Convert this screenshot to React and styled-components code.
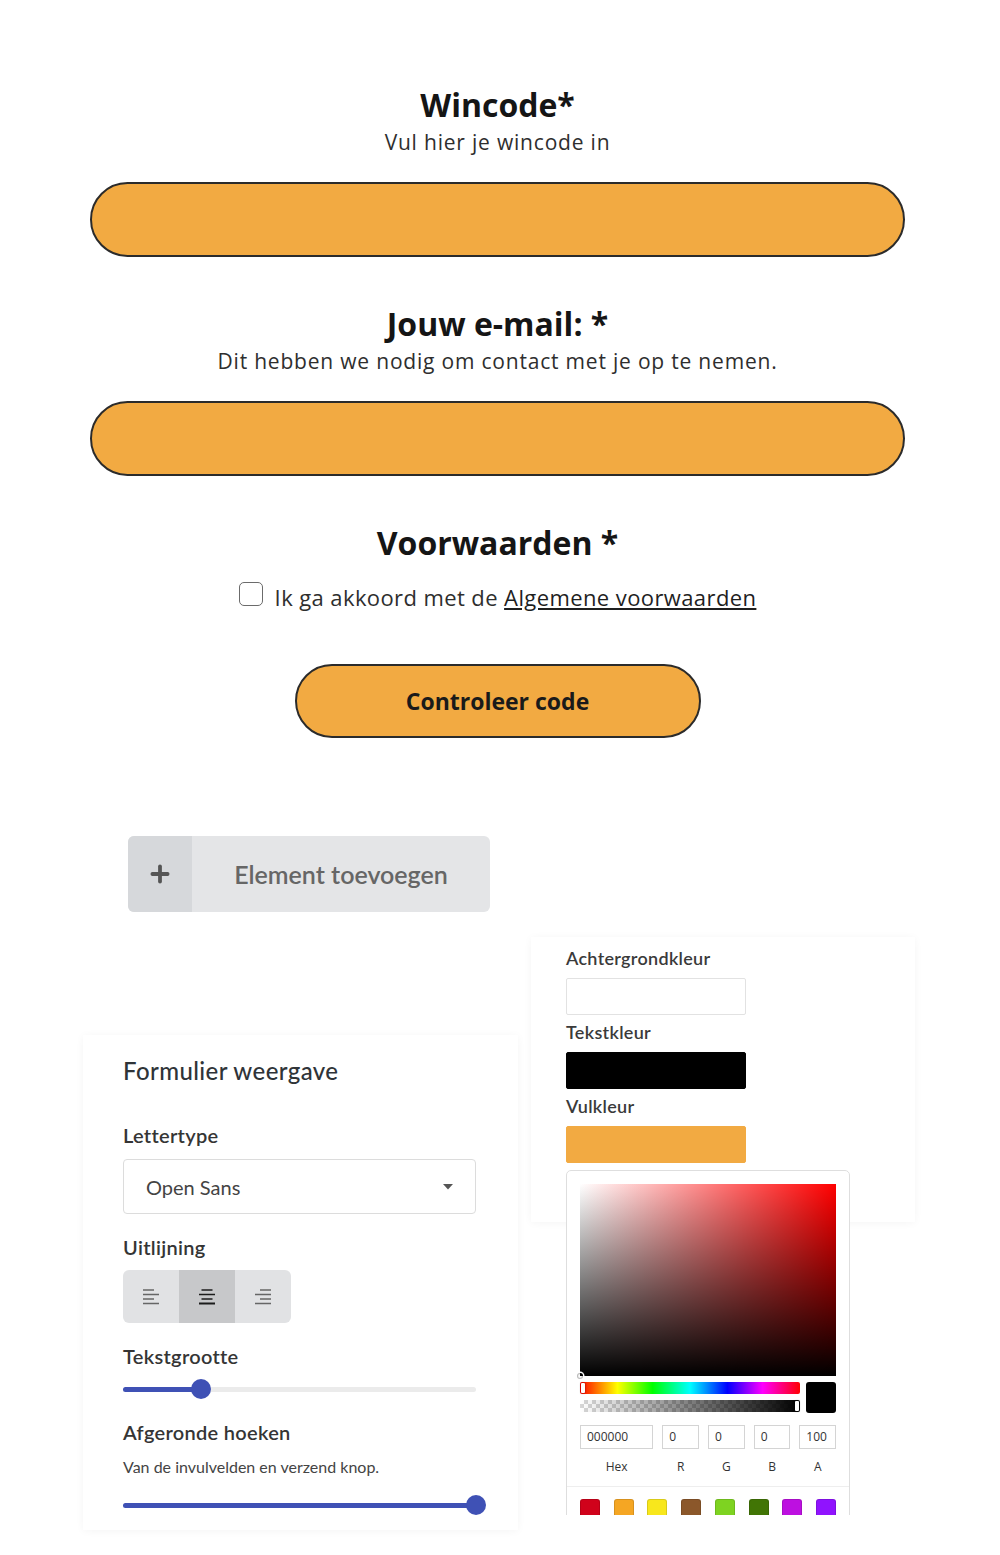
import styled, { createGlobalStyle } from "styled-components";
import { Plus } from "lucide-react";

const ORANGE = "#f2aa42";
const INDIGO = "#3f51b5";

const GlobalStyle = createGlobalStyle`
  body {
    margin: 0;
    background: #fff;
    font-family: "Open Sans", "Liberation Sans", sans-serif;
  }
  * { box-sizing: border-box; }
`;

const Page = styled.main`
  width: 1000px;
  height: 1555px;
  overflow: hidden;
`;

/* ---------- formulier voorbeeld ---------- */

const Form = styled.form`
  width: 815px;
  margin-left: 90px;
  padding-top: 85px;
  display: flex;
  flex-direction: column;
  align-items: center;
  font-family: "Open Sans", sans-serif;
`;

const FieldTitle = styled.h2`
  margin: ${(p) => (p.$first ? "0" : "47px")} 0 0;
  font-size: 32px;
  line-height: 40px;
  font-weight: 700;
  color: #151515;
`;

const FieldHint = styled.p`
  margin: 3px 0 0;
  font-size: 21px;
  line-height: 28px;
  letter-spacing: 0.8px;
  color: #2e2e2e;
`;

const TextField = styled.input`
  margin-top: 26px;
  width: 100%;
  height: 75px;
  border: 2px solid #2b2b2b;
  border-radius: 40px;
  background: ${ORANGE};
  outline: none;
`;

const CheckRow = styled.label`
  margin-top: 20px;
  display: flex;
  align-items: center;
  gap: 12px;
  font-size: 22px;
  line-height: 28px;
  letter-spacing: 0.4px;
  color: #2e2e2e;

  a {
    color: #1f1f1f;
    text-decoration: underline;
  }
`;

const Check = styled.input`
  appearance: none;
  margin: 0;
  width: 24px;
  height: 24px;
  border: 1.5px solid #6b6b6b;
  border-radius: 5px;
  background: #fff;
  position: relative;
  top: -3px;
`;

const Submit = styled.button`
  margin-top: 53px;
  width: 406px;
  height: 74px;
  border: 2px solid #2b2b2b;
  border-radius: 40px;
  background: ${ORANGE};
  font-family: "Open Sans", sans-serif;
  font-size: 23px;
  font-weight: 700;
  color: #1a1a1a;
`;

/* ---------- element toevoegen ---------- */

const AddButton = styled.button`
  margin: 98px 0 0 128px;
  width: 362px;
  height: 76px;
  padding: 0;
  border: none;
  border-radius: 6px;
  overflow: hidden;
  display: flex;
  background: #e4e5e7;
  font-family: Lato, sans-serif;
  font-size: 25px;
  font-weight: 600;
  color: #666;
`;

const AddIcon = styled.span`
  width: 64px;
  display: flex;
  align-items: center;
  justify-content: center;
  background: #d6d8db;
  color: #555;
`;

const AddLabel = styled.span`
  flex: 1;
  display: flex;
  align-items: center;
  justify-content: center;
`;

/* ---------- instellingen ---------- */

const SettingsRow = styled.div`
  margin-top: 25px;
  padding-left: 83px;
  display: flex;
  align-items: flex-start;
  gap: 13px;
  font-family: Lato, sans-serif;
  color: #333;
`;

const Panel = styled.section`
  background: #fff;
  box-shadow: 0 1px 8px rgba(0, 0, 0, 0.045);
`;

const LayoutPanel = styled(Panel)`
  margin-top: 98px;
  width: 435px;
  padding: 22px 42px 15px 40px;
`;

const ColorPanel = styled(Panel)`
  width: 384px;
  height: 285px;
  padding: 10px 35px;
`;

const PanelTitle = styled.h3`
  margin: 0;
  font-size: 24px;
  line-height: 28px;
  font-weight: 500;
  letter-spacing: 0.4px;
  color: #2f3438;
`;

const SettingLabel = styled.h4`
  margin: ${(p) => p.$top || "21px"} 0 0;
  font-size: 20px;
  line-height: 24px;
  font-weight: 600;
  letter-spacing: 0.3px;
  color: #353535;
`;

const SmallHint = styled.p`
  margin: 13px 0 0;
  font-size: 16px;
  line-height: 20px;
  color: #444;
`;

const Select = styled.div`
  margin-top: 12px;
  height: 55px;
  border: 1px solid #dcdcdc;
  border-radius: 4px;
  padding: 0 22px;
  display: flex;
  align-items: center;
  justify-content: space-between;
  font-size: 20px;
  color: #444;
`;

const AlignGroup = styled.div`
  margin-top: 11px;
  display: inline-flex;
  border-radius: 6px;
  overflow: hidden;
  background: #e1e2e4;
`;

const AlignButton = styled.button`
  width: 56px;
  height: 53px;
  border: none;
  padding: 0;
  display: flex;
  align-items: center;
  justify-content: center;
  background: ${(p) => (p.$active ? "#c7c8ca" : "transparent")};
  color: ${(p) => (p.$active ? "#1c1c1c" : "#666")};
`;

const Slider = styled.div`
  margin-top: ${(p) => p.$top || "11px"};
  position: relative;
  height: 20px;
  width: 353px;
`;

const Track = styled.div`
  position: absolute;
  left: 0;
  right: 0;
  top: 8px;
  height: 5px;
  border-radius: 3px;
  background: #ebebeb;
`;

const Fill = styled.div`
  height: 100%;
  border-radius: 3px;
  background: ${INDIGO};
`;

const Thumb = styled.div`
  position: absolute;
  top: 0;
  width: 20px;
  height: 20px;
  margin-left: -10px;
  border-radius: 50%;
  background: ${INDIGO};
`;

const ColorLabel = styled.h4`
  margin: ${(p) => (p.$first ? "0" : "6px")} 0 0;
  font-size: 18px;
  line-height: 22px;
  font-weight: 600;
  letter-spacing: 0.3px;
  color: #3a3a3a;
`;

const ColorField = styled.div`
  position: relative;
`;

const Swatch = styled.div`
  margin-top: 9px;
  width: 180px;
  height: 37px;
  border: 1px solid ${(p) => (p.$color === "#ffffff" ? "#e2e2e2" : p.$color)};
  border-radius: 2px;
  background: ${(p) => p.$color};
`;

/* ---------- kleurkiezer ---------- */

const Popover = styled.div`
  position: absolute;
  top: calc(100% + 7px);
  left: 0;
  z-index: 2;
  height: 345px;
  overflow: hidden;
`;

const Picker = styled.div`
  width: 284px;
  padding: 13px 13px 20px;
  background: #fff;
  border: 1px solid #dedede;
  border-radius: 5px;
  font-family: "Open Sans", sans-serif;
`;

const Saturation = styled.div`
  position: relative;
  height: 192px;
  background: linear-gradient(to top, #000, rgba(0, 0, 0, 0)),
    linear-gradient(to right, #fff, rgba(255, 255, 255, 0)), #f00;
`;

const SatPointer = styled.div`
  position: absolute;
  left: -3px;
  bottom: -3px;
  width: 6px;
  height: 6px;
  border-radius: 50%;
  box-shadow: 0 0 0 1.5px #fff, inset 0 0 1px 1px rgba(0, 0, 0, 0.3);
`;

const Controls = styled.div`
  margin-top: 6px;
  display: flex;
  gap: 6px;
`;

const Bars = styled.div`
  flex: 1;
  display: flex;
  flex-direction: column;
  gap: 6px;
`;

const Bar = styled.div`
  position: relative;
  height: 12px;
  border-radius: 2px;
  background: ${(p) =>
    p.$kind === "hue"
      ? "linear-gradient(to right, #f00 0%, #ff0 17%, #0f0 33%, #0ff 50%, #00f 67%, #f0f 83%, #f00 100%)"
      : "linear-gradient(to right, rgba(0,0,0,0), #000), repeating-conic-gradient(#d6d6d6 0 25%, #fff 0 50%) 0 0 / 8px 8px"};
`;

const BarHandle = styled.div`
  position: absolute;
  top: 1px;
  bottom: 1px;
  width: 4px;
  border-radius: 1px;
  background: #fff;
  box-shadow: 0 0 2px rgba(0, 0, 0, 0.6);
  ${(p) => (p.$end ? "right: 1px;" : "left: 1px;")}
`;

const Preview = styled.div`
  width: 30px;
  height: 31px;
  border-radius: 3px;
  background: #000;
`;

const InputRow = styled.div`
  margin-top: 12px;
  display: flex;
  gap: 9px;
`;

const ValueBox = styled.div`
  flex: ${(p) => (p.$wide ? 2 : 1)};
  display: flex;
  flex-direction: column;
  align-items: center;
`;

const Value = styled.div`
  width: 100%;
  height: 24px;
  padding-left: 6px;
  border: 1px solid #d4d4d4;
  font-size: 12px;
  line-height: 22px;
  color: #333;
`;

const ValueLabel = styled.span`
  margin-top: 10px;
  font-size: 12px;
  line-height: 16px;
  color: #333;
`;

const Divider = styled.div`
  margin: 11px -13px 0;
  border-top: 1px solid #eee;
`;

const Presets = styled.div`
  margin-top: 12px;
  display: flex;
  justify-content: space-between;
`;

const Preset = styled.div`
  width: 20px;
  height: 20px;
  border-radius: 3px;
  background: ${(p) => p.$color};
  box-shadow: inset 0 0 0 1px rgba(0, 0, 0, 0.12);
`;

const presetColors = ["#d0021b", "#f5a623", "#f8e71c", "#8b572a", "#7ed321", "#417505", "#bd10e0", "#9013fe"];

function AlignIcon({ side }) {
  const rows = [
    [11, 2],
    [16, 6.5],
    [11, 11],
    [16, 15.5],
  ];
  return (
    <svg width="18" height="18" viewBox="0 0 18 18">
      {rows.map(([w, y], i) => {
        const x = side === "left" ? 1 : side === "right" ? 17 - w : (18 - w) / 2;
        return (
          <line
            key={i}
            x1={x}
            x2={x + w}
            y1={y}
            y2={y}
            stroke="currentColor"
            strokeWidth={side === "center" && i === 3 ? 2.2 : 1.5}
          />
        );
      })}
    </svg>
  );
}

function RangeSlider({ value, top }) {
  return (
    <Slider $top={top}>
      <Track>
        <Fill style={{ width: `${value}%` }} />
      </Track>
      <Thumb style={{ left: `${value}%` }} />
    </Slider>
  );
}

function ColorPicker() {
  return (
    <Picker>
      <Saturation>
        <SatPointer />
      </Saturation>
      <Controls>
        <Bars>
          <Bar $kind="hue">
            <BarHandle />
          </Bar>
          <Bar $kind="alpha">
            <BarHandle $end />
          </Bar>
        </Bars>
        <Preview />
      </Controls>
      <InputRow>
        <ValueBox $wide>
          <Value>000000</Value>
          <ValueLabel>Hex</ValueLabel>
        </ValueBox>
        {[["0", "R"], ["0", "G"], ["0", "B"], ["100", "A"]].map(([v, l]) => (
          <ValueBox key={l}>
            <Value>{v}</Value>
            <ValueLabel>{l}</ValueLabel>
          </ValueBox>
        ))}
      </InputRow>
      <Divider />
      <Presets>
        {presetColors.map((c) => (
          <Preset key={c} $color={c} />
        ))}
      </Presets>
    </Picker>
  );
}

export default function App() {
  return (
    <Page>
      <GlobalStyle />
      <Form onSubmit={(e) => e.preventDefault()}>
        <FieldTitle $first>Wincode*</FieldTitle>
        <FieldHint>Vul hier je wincode in</FieldHint>
        <TextField type="text" />

        <FieldTitle>Jouw e-mail: *</FieldTitle>
        <FieldHint>Dit hebben we nodig om contact met je op te nemen.</FieldHint>
        <TextField type="email" />

        <FieldTitle>Voorwaarden *</FieldTitle>
        <CheckRow>
          <Check type="checkbox" />
          <span>
            Ik ga akkoord met de <a href="#voorwaarden">Algemene voorwaarden</a>
          </span>
        </CheckRow>

        <Submit type="submit">Controleer code</Submit>
      </Form>

      <AddButton type="button">
        <AddIcon>
          <Plus size={26} strokeWidth={3.5} />
        </AddIcon>
        <AddLabel>Element toevoegen</AddLabel>
      </AddButton>

      <SettingsRow>
        <LayoutPanel>
          <PanelTitle>Formulier weergave</PanelTitle>

          <SettingLabel $top="38px">Lettertype</SettingLabel>
          <Select>
            <span>Open Sans</span>
            <svg width="10" height="6" viewBox="0 0 10 6">
              <path d="M0 0 L10 0 L5 5.5 Z" fill="#555" />
            </svg>
          </Select>

          <SettingLabel>Uitlijning</SettingLabel>
          <AlignGroup>
            <AlignButton type="button">
              <AlignIcon side="left" />
            </AlignButton>
            <AlignButton type="button" $active>
              <AlignIcon side="center" />
            </AlignButton>
            <AlignButton type="button">
              <AlignIcon side="right" />
            </AlignButton>
          </AlignGroup>

          <SettingLabel>Tekstgrootte</SettingLabel>
          <RangeSlider value={22} />

          <SettingLabel>Afgeronde hoeken</SettingLabel>
          <SmallHint>Van de invulvelden en verzend knop.</SmallHint>
          <RangeSlider value={100} top="18px" />
        </LayoutPanel>

        <ColorPanel>
          <ColorLabel $first>Achtergrondkleur</ColorLabel>
          <Swatch $color="#ffffff" />
          <ColorLabel>Tekstkleur</ColorLabel>
          <Swatch $color="#000000" />
          <ColorLabel>Vulkleur</ColorLabel>
          <ColorField>
            <Swatch $color={ORANGE} />
            <Popover>
              <ColorPicker />
            </Popover>
          </ColorField>
        </ColorPanel>
      </SettingsRow>
    </Page>
  );
}
